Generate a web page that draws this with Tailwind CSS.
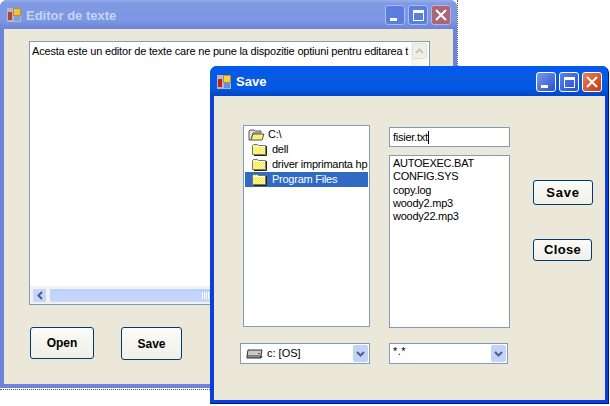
<!DOCTYPE html>
<html>
<head>
<meta charset="utf-8">
<title>Editor de texte</title>
<script src="https://cdn.jsdelivr.net/npm/@tailwindcss/browser@4"></script>
</head>
<body class="bg-white">
<div class="relative w-[610px] h-[406px] overflow-hidden bg-white font-['Liberation_Sans',sans-serif] text-[11px] tracking-[-0.25px] text-black">

    <!-- Shared folder fill -->
    <svg width="0" height="0" class="absolute">
        <defs>
            <pattern id="dither" width="2" height="2" patternUnits="userSpaceOnUse">
                <rect width="2" height="2" fill="#f6ee3a"/>
                <rect width="1" height="1" fill="#fff9a8"/>
                <rect x="1" y="1" width="1" height="1" fill="#fff9a8"/>
            </pattern>
        </defs>
    </svg>

    <!-- Editor window (inactive) -->
    <div class="absolute left-0 top-0 w-[458px] h-[390px] border-r border-b border-dotted border-[#555577]">
        <div class="w-[457px] h-[388px] rounded-t-[7px] bg-[#6f83d8] flex flex-col">
            <!-- Title bar -->
            <div class="h-[29px] shrink-0 rounded-t-[7px] bg-[linear-gradient(180deg,#98aeea_0%,#7f9ae3_12%,#7c98e2_70%,#6e83d8_100%)] flex items-center pt-[1px] pl-[7px] pr-[6px]">
                <svg width="14" height="14" viewBox="0 0 14 14" class="shrink-0">
                    <rect x="0" y="0" width="14" height="14" fill="#b6b6c8"/>
                    <rect x="6.5" y="0.5" width="7" height="7" fill="#f0c040" stroke="#b89030" stroke-width="1"/>
                    <rect x="1" y="4" width="4" height="8" fill="#b04040"/>
                    <rect x="7" y="8" width="6" height="5" fill="#7f9fdf"/>
                </svg>
                <span class="ml-[5px] mt-[2px] text-[13px] font-bold tracking-normal text-[#c6d3f5]">Editor de texte</span>
                <div class="ml-auto flex gap-[3px]">
                    <div class="w-[20px] h-[20px] rounded-[3px] border border-[#a9bcec] bg-[#5a7de0] flex items-end pl-[4px] pb-[3px]"><div class="w-[7px] h-[3px] bg-white"></div></div>
                    <div class="w-[20px] h-[20px] rounded-[3px] border border-[#a9bcec] bg-[#5a7de0] flex items-center justify-center"><div class="w-[11px] h-[11px] border border-white border-t-[3px]"></div></div>
                    <div class="w-[20px] h-[20px] rounded-[3px] border border-[#b9b4d8] bg-[#a86678] flex items-center justify-center">
                        <svg width="12" height="12" viewBox="0 0 12 12"><path d="M1 1 L11 11 M11 1 L1 11" stroke="#fff" stroke-width="2"/></svg>
                    </div>
                </div>
            </div>
            <!-- Client area -->
            <div class="ml-[4px] mr-[4px] mb-[4px] flex-1 bg-[#ebe8d9] pl-[25px] pt-[12px] flex flex-col">
                <div class="relative w-[401px] h-[264px] border border-[#7f9db9] bg-white overflow-hidden">
                    <div class="pl-[2px] pt-[2px] w-[381px] overflow-hidden whitespace-nowrap leading-[14px] tracking-[-0.19px]">Acesta este un editor de texte care ne pune la dispozitie optiuni pentru editarea t</div>
                    <!-- vertical scrollbar -->
                    <div class="absolute right-0 top-0 w-[18px] h-[245px] bg-[linear-gradient(90deg,#f3f2ec,#fdfdfa)] pt-[1px] pl-[1px]">
                        <div class="w-[15px] h-[16px] rounded-[2px] border border-[#e0dfd6] bg-[#f0efe8] flex items-center justify-center">
                            <svg width="9" height="6" viewBox="0 0 9 6"><path d="M1 5 L4.5 1.5 L8 5" fill="none" stroke="#c8c7be" stroke-width="2"/></svg>
                        </div>
                    </div>
                    <!-- horizontal scrollbar -->
                    <div class="absolute left-0 bottom-0 w-[381px] h-[18px] bg-[#f3f2ec] flex items-center gap-[2px] pl-[2px]">
                        <div class="w-[15px] h-[15px] rounded-[2px] border border-[#eef2fb] bg-[#c5d6f8] flex items-center justify-center shrink-0">
                            <svg width="6" height="9" viewBox="0 0 6 9"><path d="M5 1 L1.5 4.5 L5 8" fill="none" stroke="#4d6185" stroke-width="2"/></svg>
                        </div>
                        <div class="w-[312px] h-[15px] rounded-[2px] border border-[#eef2fb] bg-[linear-gradient(180deg,#bdd0f8,#c8d9fb)] flex items-center justify-center gap-[1px]">
                            <div class="w-px h-[7px] bg-white"></div>
                            <div class="w-px h-[7px] bg-white"></div>
                            <div class="w-px h-[7px] bg-white"></div>
                            <div class="w-px h-[7px] bg-white"></div>
                        </div>
                    </div>
                </div>
                <div class="flex mt-[22px] ml-[1px] gap-[27px]">
                    <button class="w-[64px] h-[32px] rounded-[3px] border border-[#003c74] bg-[linear-gradient(180deg,#fbfbf8,#f0efe7)] text-[12px] font-bold tracking-normal">Open</button>
                    <button class="w-[61px] h-[33px] rounded-[3px] border border-[#003c74] bg-[linear-gradient(180deg,#fbfbf8,#f0efe7)] text-[12px] font-bold tracking-normal">Save</button>
                </div>
            </div>
        </div>
    </div>

    <!-- Save window (active) -->
    <div class="absolute left-[210px] top-[66px] w-[399px] h-[338px] rounded-t-[7px] bg-[#0a3fd8] border-r border-b border-[#00138c] flex flex-col">
        <!-- Title bar -->
        <div class="h-[30px] shrink-0 rounded-t-[7px] bg-[linear-gradient(180deg,#0a5be8_0%,#0058ee_10%,#0a5ae0_35%,#0358e4_75%,#0345c4_100%)] flex items-center pt-[2px] pl-[7px] pr-[6px]">
            <svg width="14" height="14" viewBox="0 0 14 14" class="shrink-0">
                <rect x="0" y="0" width="14" height="14" fill="#b6b6c8"/>
                <rect x="6.5" y="0.5" width="7" height="7" fill="#f8d040" stroke="#b89030" stroke-width="1"/>
                <rect x="1" y="4" width="4" height="8" fill="#c02020"/>
                <rect x="7" y="8" width="6" height="5" fill="#5f8fe8"/>
            </svg>
            <span class="ml-[5px] text-[13px] font-bold tracking-normal text-white">Save</span>
            <div class="ml-auto flex gap-[3px]">
                <div class="w-[20px] h-[20px] rounded-[3px] border border-white bg-[linear-gradient(135deg,#7d9ae8,#2450d8)] flex items-end pl-[4px] pb-[3px]"><div class="w-[7px] h-[3px] bg-white"></div></div>
                <div class="w-[20px] h-[20px] rounded-[3px] border border-white bg-[linear-gradient(135deg,#5a80e8,#2450d8)] flex items-center justify-center"><div class="w-[11px] h-[11px] border border-white border-t-[3px]"></div></div>
                <div class="w-[20px] h-[20px] rounded-[3px] border border-white bg-[linear-gradient(135deg,#e8805c,#c83810)] flex items-center justify-center">
                    <svg width="12" height="12" viewBox="0 0 12 12"><path d="M1 1 L11 11 M11 1 L1 11" stroke="#fff" stroke-width="2"/></svg>
                </div>
            </div>
        </div>
        <!-- Client area -->
        <div class="ml-[4px] mr-[3px] mb-[3px] flex-1 bg-[#ebe8d9] pl-[26px] pt-[29px] flex">
            <!-- Left column -->
            <div class="w-[130px] flex flex-col">
                <div class="ml-[3px] w-[127px] h-[202px] border border-[#7f9db9] bg-white pt-[1px] px-[1px]">
                    <div class="flex items-center h-[15px] pl-[3px] gap-[3px]">
                        <svg width="17" height="14" viewBox="0 0 17 14" class="shrink-0"><path d="M1 12 V3 L2 2 H6 L7 3 H13 V5 H5 L3 12 Z" fill="#e8e8d8" stroke="#555"/><path d="M3 12 L5 6 H16 L14 12 Z" fill="url(#dither)" stroke="#555"/></svg>
                        <span>C:\</span>
                    </div>
                    <div class="flex items-center h-[15px] pl-[7px] gap-[5px]">
                        <svg width="15" height="13" viewBox="0 0 15 13" class="shrink-0"><path d="M0.5 11.5 V2.5 L1.5 1.5 H5.5 L6.5 2.5 H13.5 V11.5 Z" fill="url(#dither)" stroke="#777"/><path d="M1 3.5 H13" stroke="#fff"/><path d="M14.5 3 V12.5 H2" fill="none" stroke="#222"/></svg>
                        <span>dell</span>
                    </div>
                    <div class="flex items-center h-[15px] pl-[7px] gap-[5px]">
                        <svg width="15" height="13" viewBox="0 0 15 13" class="shrink-0"><path d="M0.5 11.5 V2.5 L1.5 1.5 H5.5 L6.5 2.5 H13.5 V11.5 Z" fill="url(#dither)" stroke="#777"/><path d="M1 3.5 H13" stroke="#fff"/><path d="M14.5 3 V12.5 H2" fill="none" stroke="#222"/></svg>
                        <span class="whitespace-nowrap">driver imprimanta hp</span>
                    </div>
                    <div class="flex items-center h-[15px] pl-[7px] gap-[5px] bg-[#316ac5] text-white">
                        <svg width="15" height="13" viewBox="0 0 15 13" class="shrink-0"><path d="M0.5 11.5 V2.5 L1.5 1.5 H5.5 L6.5 2.5 H13.5 V11.5 Z" fill="url(#dither)" stroke="#777"/><path d="M1 3.5 H13" stroke="#fff"/><path d="M14.5 3 V12.5 H2" fill="none" stroke="#222"/></svg>
                        <span>Program Files</span>
                    </div>
                </div>
                <div class="mt-[16px] w-[130px] h-[21px] border border-[#7f9db9] bg-white flex items-center pl-[5px] pr-[1px]">
                    <svg width="17" height="10" viewBox="0 0 17 10" class="shrink-0"><path d="M2 1 H16 L15 7 H1 Z" fill="#c8c8c8" stroke="#333"/><path d="M1 7 V9 H15 V7 M15 9 L16 7" fill="#888" stroke="#333"/><rect x="12" y="4" width="2" height="1" fill="#555"/></svg>
                    <span class="ml-[4px] tracking-normal">c: [OS]</span>
                    <div class="ml-auto w-[15px] h-[17px] rounded-[2px] bg-[#c3d3f8] flex items-center justify-center">
                        <svg width="9" height="6" viewBox="0 0 9 6"><path d="M1 1 L4.5 4.5 L8 1" fill="none" stroke="#4d6185" stroke-width="2"/></svg>
                    </div>
                </div>
            </div>
            <!-- Middle column -->
            <div class="ml-[19px] w-[121px] pt-[2px] flex flex-col">
                <div class="h-[20px] border border-[#7f9db9] bg-white flex items-center pl-[3px]"><span>fisier.txt</span><span class="w-px h-[13px] bg-black"></span></div>
                <div class="mt-[8px] h-[173px] border border-[#7f9db9] bg-white pl-[3px] pt-[1px] leading-[13.3px]">
                    <div>AUTOEXEC.BAT</div>
                    <div>CONFIG.SYS</div>
                    <div>copy.log</div>
                    <div>woody2.mp3</div>
                    <div>woody22.mp3</div>
                </div>
                <div class="mt-[15px] w-[119px] h-[21px] border border-[#7f9db9] bg-white flex pl-[3px] pr-[1px] items-center">
                    <span class="leading-[14px] tracking-[0.5px] self-start">*.*</span>
                    <div class="ml-auto w-[15px] h-[17px] rounded-[2px] bg-[#c3d3f8] flex items-center justify-center">
                        <svg width="9" height="6" viewBox="0 0 9 6"><path d="M1 1 L4.5 4.5 L8 1" fill="none" stroke="#4d6185" stroke-width="2"/></svg>
                    </div>
                </div>
            </div>
            <!-- Right column -->
            <div class="ml-[23px] pt-[55px] flex flex-col items-start">
                <button class="w-[60px] h-[25px] rounded-[3px] border border-[#003c74] bg-[linear-gradient(180deg,#fbfbf8,#f0efe7)] text-[13px] font-bold tracking-[0.8px]">Save</button>
                <button class="mt-[34px] w-[59px] h-[22px] rounded-[3px] border border-[#003c74] bg-[linear-gradient(180deg,#fbfbf8,#f0efe7)] text-[13px] font-bold tracking-[0.3px]">Close</button>
            </div>
        </div>
    </div>
</div>
</body>
</html>
